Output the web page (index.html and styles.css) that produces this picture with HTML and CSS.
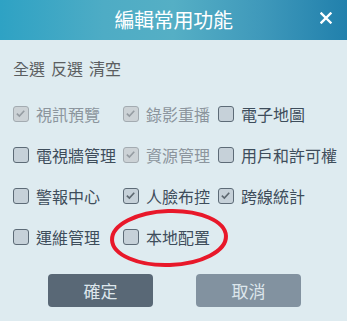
FILE: index.html
```html
<!DOCTYPE html>
<html lang="zh-Hant">
<head>
<meta charset="utf-8">
<link rel="stylesheet" href="styles.css">
</head>
<body>
<div class="dialog">
  <div class="header">
    <span class="title">編輯常用功能</span>
    <svg class="close" width="12" height="12" viewBox="0 0 12 12"><path d="M1.5 1.5 L10.5 10.5 M10.5 1.5 L1.5 10.5" stroke="#fff" stroke-width="2.4" stroke-linecap="square"/></svg>
  </div>
  <div class="toolbar"><span>全選</span><span>反選</span><span>清空</span></div>
  <div class="grid">
    <label class="item disabled"><span class="cb checked"><svg viewBox="0 0 16 16"><path d="M3.5 8.2 L6.6 11.2 L12.6 4.6"/></svg></span>視訊預覽</label>
    <label class="item disabled"><span class="cb checked"><svg viewBox="0 0 16 16"><path d="M3.5 8.2 L6.6 11.2 L12.6 4.6"/></svg></span>錄影重播</label>
    <label class="item"><span class="cb"></span>電子地圖</label>

    <label class="item"><span class="cb"></span>電視牆管理</label>
    <label class="item disabled"><span class="cb checked"><svg viewBox="0 0 16 16"><path d="M3.5 8.2 L6.6 11.2 L12.6 4.6"/></svg></span>資源管理</label>
    <label class="item"><span class="cb"></span>用戶和許可權</label>

    <label class="item"><span class="cb"></span>警報中心</label>
    <label class="item"><span class="cb checked"><svg viewBox="0 0 16 16"><path d="M3.5 8.2 L6.6 11.2 L12.6 4.6"/></svg></span>人臉布控</label>
    <label class="item"><span class="cb checked"><svg viewBox="0 0 16 16"><path d="M3.5 8.2 L6.6 11.2 L12.6 4.6"/></svg></span>跨線統計</label>

    <label class="item"><span class="cb"></span>運維管理</label>
    <label class="item"><span class="cb"></span>本地配置</label>
  </div>
  <div class="buttons">
    <button class="btn ok">確定</button>
    <button class="btn cancel">取消</button>
  </div>
  <svg class="mark" width="130" height="66" viewBox="0 0 130 66"><ellipse cx="65" cy="33" rx="57" ry="27" fill="none" stroke="#e8182a" stroke-width="4" transform="rotate(-2 65 33)"/></svg>
</div>
</body>
</html>
```
FILE: styles.css
```css
html, body {
  margin: 0;
  padding: 0;
}
body {
  width: 347px;
  height: 321px;
  background: #deebf0;
  font-family: "Noto Sans CJK TC", "Noto Sans", sans-serif;
  overflow: hidden;
}
.dialog {
  position: relative;
  width: 347px;
  height: 321px;
}
.header {
  position: relative;
  height: 40px;
  display: flex;
  align-items: center;
  justify-content: center;
  background: linear-gradient(90deg, #2ea2c4 0%, #4eacc5 30%, #55afc5 50%, #3f99bb 75%, #2180ac 100%);
}
.title {
  color: #ffffff;
  font-size: 20px;
  line-height: 24px;
  letter-spacing: -0.3px;
}
.close {
  position: absolute;
  right: 15px;
  top: 12px;
}
.toolbar {
  margin-top: 16px;
  padding-left: 13px;
  display: flex;
  gap: 6px;
  font-size: 16px;
  line-height: 24px;
  color: #5b5e61;
}
.grid {
  margin-top: 13px;
  padding-left: 13px;
  display: grid;
  grid-template-columns: 110px 95px auto;
  grid-auto-rows: 41px;
}
.item {
  display: flex;
  align-items: center;
  gap: 7px;
  font-size: 16px;
  color: #3e4d5b;
  white-space: nowrap;
}
.item.disabled {
  color: #8c959d;
}
.cb {
  box-sizing: border-box;
  width: 16px;
  height: 16px;
  border: 1.5px solid #5d6b77;
  border-radius: 3px;
  background: #c6d1d9;
  flex: none;
  display: flex;
}
.cb svg {
  width: 13px;
  height: 13px;
}
.cb svg path {
  fill: none;
  stroke: #5d6870;
  stroke-width: 2;
}
.disabled .cb {
  border-color: #a3abb1;
  background: #ccd2d6;
}
.disabled .cb svg path {
  stroke: #959ca2;
}
.buttons {
  margin-top: 17px;
  display: flex;
  padding-left: 48px;
  gap: 43px;
}
.btn {
  width: 105px;
  height: 33px;
  border: none;
  border-radius: 4px;
  font-family: "Noto Sans CJK TC", "Noto Sans", sans-serif;
  font-size: 17px;
  color: #dde6ec;
  padding: 0;
}
.ok {
  background: #596876;
}
.cancel {
  background: #8292a0;
}
.mark {
  position: absolute;
  left: 104px;
  top: 205px;
}
```
